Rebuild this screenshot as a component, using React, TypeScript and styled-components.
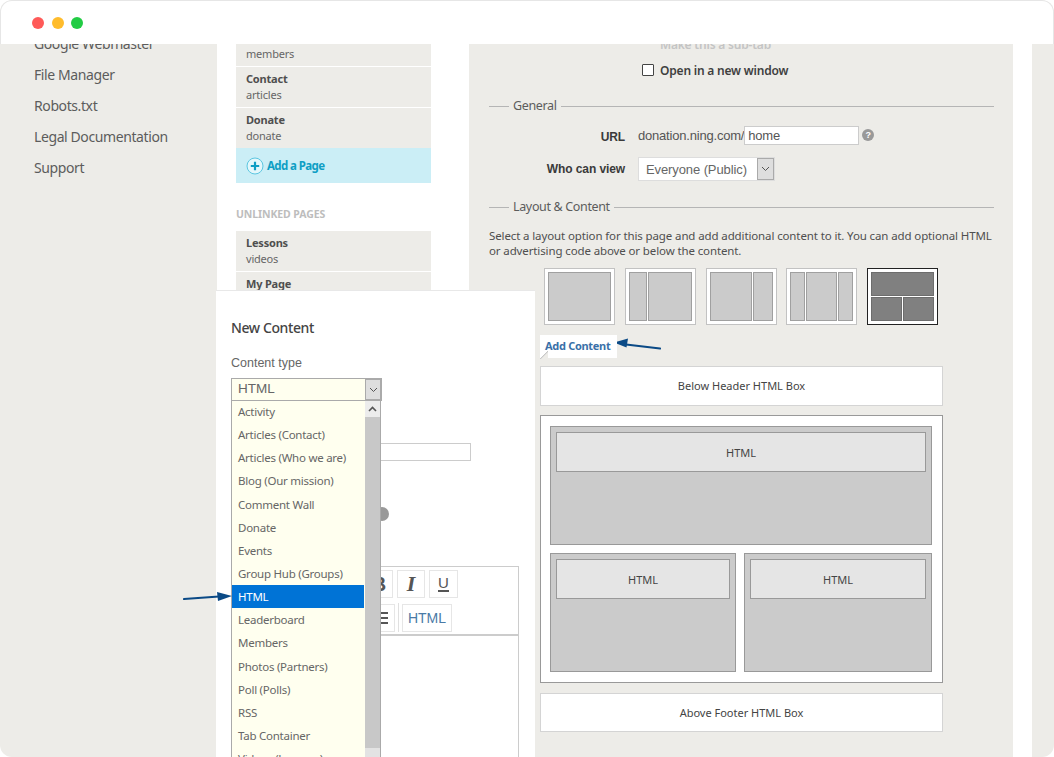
import React from 'react';
import styled, { createGlobalStyle } from 'styled-components';

const UI_FONT = '"Noto Sans", "Open Sans", sans-serif';
const FORM_FONT = '"Liberation Sans", Arial, sans-serif';

const GlobalStyle = createGlobalStyle`
  html, body {
    margin: 0;
    padding: 0;
    background: #fff;
    overflow: hidden;
  }

  * {
    box-sizing: border-box;
  }
`;

const Frame = styled.div`
  position: relative;
  width: 1054px;
  height: 757px;
  display: flex;
  flex-direction: column;
  overflow: hidden;
  background: #edece8;
  border-radius: 12px;
  font-family: ${UI_FONT};
  color: #555;
`;

const TitleBar = styled.header`
  flex: 0 0 44px;
  display: flex;
  align-items: center;
  gap: 7.5px;
  padding: 1px 0 0 31px;
  background: #fff;
  border: 1px solid #e6e6e6;
  border-bottom: 0;
  border-radius: 12px 12px 0 0;
`;

const Dot = styled.span<{ $color: string }>`
  width: 12px;
  height: 12px;
  border-radius: 50%;
  background: ${(p) => p.$color};
`;

const Body = styled.div`
  flex: 1;
  display: flex;
  min-height: 0;
  overflow: hidden;
`;

const Sidebar = styled.nav`
  flex: 0 0 217px;
  display: flex;
  flex-direction: column;
  margin-top: -16px;
  padding-left: 34px;
`;

const SideLink = styled.div`
  height: 31px;
  line-height: 31px;
  font-size: 14px;
  color: #5c5c5c;
  letter-spacing: -0.4px;
`;

const PagesColumn = styled.section`
  flex: 0 0 252px;
  display: flex;
  flex-direction: column;
  margin-top: -18px;
  padding-left: 19px;
  padding-right: 38px;
  background: #fff;
`;

const PageRow = styled.div`
  height: 40px;
  margin-bottom: 1px;
  padding: 4px 10px 0;
  background: #edece8;
  font-size: 11px;
  line-height: 15.5px;
  letter-spacing: -0.2px;
  color: #666;
`;

const PageName = styled.div`
  font-weight: 700;
  color: #4f4f4f;
`;

const AddPage = styled.div`
  height: 35px;
  margin-top: -1px;
  display: flex;
  align-items: center;
  gap: 3px;
  padding-left: 10px;
  background: #cbeef6;
  color: #0f9ec4;
  font-size: 11.5px;
  font-weight: 700;
  letter-spacing: -0.6px;
`;

const SectionHead = styled.div`
  margin: 23px 0 9px;
  height: 16px;
  line-height: 16px;
  font-size: 10.5px;
  font-weight: 700;
  letter-spacing: -0.1px;
  color: #bdbdbd;
`;

const FormPanel = styled.section`
  flex: 0 0 544px;
  display: flex;
  flex-direction: column;
  margin-top: -8px;
  padding: 0 19px 0 20px;
`;

const CheckRow = styled.label<{ $muted?: boolean }>`
  height: 16px;
  margin-bottom: 10px;
  display: flex;
  align-items: center;
  gap: 6px;
  padding-left: 153px;
  font-size: 12px;
  font-weight: 600;
  letter-spacing: -0.2px;
  color: ${(p) => (p.$muted ? '#c4c4c4' : '#3f3f3f')};
`;

const CheckBox = styled.span<{ $muted?: boolean }>`
  width: 12px;
  height: 12px;
  background: #fff;
  border: 1px solid ${(p) => (p.$muted ? 'transparent' : '#444')};
  border-radius: 1px;
  opacity: ${(p) => (p.$muted ? 0 : 1)};
`;

const Legend = styled.div<{ $mt: number }>`
  margin-top: ${(p) => p.$mt}px;
  display: flex;
  align-items: center;
  gap: 4px;
  font-size: 12.5px;
  line-height: 18px;
  letter-spacing: -0.35px;
  color: #5c5c5c;

  &::before {
    content: '';
    flex: 0 0 20px;
    height: 1px;
    background: #b5b5b5;
  }

  &::after {
    content: '';
    flex: 1;
    height: 1px;
    background: #b5b5b5;
  }
`;

const FieldRow = styled.div<{ $h: number; $mt: number }>`
  height: ${(p) => p.$h}px;
  margin-top: ${(p) => p.$mt}px;
  display: flex;
  align-items: center;
  gap: 13px;
  font-family: ${FORM_FONT};
`;

const FieldLabel = styled.div<{ $shift?: number }>`
  flex: 0 0 136px;
  padding-top: ${(p) => p.$shift || 0}px;
  text-align: right;
  font-size: 12px;
  font-weight: 700;
  letter-spacing: -0.1px;
  color: #3a3a3a;
`;

const UrlValue = styled.div`
  display: flex;
  align-items: center;
  font-size: 13px;
  letter-spacing: -0.2px;
  color: #555;
`;

const TextBox = styled.div`
  width: 115px;
  height: 19px;
  margin-right: 3px;
  padding-left: 3px;
  line-height: 17px;
  background: #fff;
  border: 1px solid #ccc;
`;

const HelpDot = styled.span`
  width: 12px;
  height: 12px;
  border-radius: 50%;
  background: #999;
  color: #fff;
  font: 700 9px/12px ${FORM_FONT};
  text-align: center;
`;

const SelectBox = styled.div`
  width: 137px;
  height: 24px;
  display: flex;
  align-items: center;
  justify-content: space-between;
  padding-left: 7px;
  background: #fff;
  border: 1px solid #ddd;
  font-size: 13px;
  letter-spacing: -0.1px;
  color: #666;
`;

const SelectArrow = styled.span<{ $w: number }>`
  align-self: stretch;
  flex: 0 0 ${(p) => p.$w}px;
  display: flex;
  align-items: center;
  justify-content: center;
  background: #dedede;
  border: 1px solid #aaa;
`;

const Intro = styled.p`
  margin: 12px 0 10px;
  font-size: 11.5px;
  line-height: 15px;
  letter-spacing: -0.12px;
  color: #4f4f4f;
`;

const ThumbRow = styled.div`
  display: flex;
  gap: 9.75px;
  padding-left: 55px;
`;

const Thumb = styled.div<{ $cols: string; $active?: boolean }>`
  width: 71px;
  height: 57px;
  display: grid;
  grid-template-columns: ${(p) => p.$cols};
  grid-auto-rows: 1fr;
  gap: 1px;
  padding: 3px;
  background: #fff;
  border: 1px solid ${(p) => (p.$active ? '#222' : '#c2c2c2')};
`;

const ThumbCell = styled.span<{ $wide?: boolean; $active?: boolean }>`
  grid-column: ${(p) => (p.$wide ? '1 / -1' : 'auto')};
  background: ${(p) => (p.$active ? '#808080' : '#cbcbcb')};
  border: 1px solid ${(p) => (p.$active ? '#6d6d6d' : '#a0a0a0')};
`;

const AddRow = styled.div`
  display: flex;
  align-items: flex-start;
  height: 31px;
  margin-top: 10px;
  padding-left: 51px;
`;

const AddTab = styled.div`
  position: relative;
  width: 77px;
  height: 23px;
  padding-left: 5px;
  line-height: 22px;
  background: #fff;
  font-size: 11px;
  font-weight: 700;
  letter-spacing: -0.3px;
  color: #3a70a8;

  &::after {
    content: '';
    position: absolute;
    left: 0;
    bottom: -1px;
    width: 8px;
    height: 8px;
    background: linear-gradient(135deg, #fff 50%, #c8c8c8 50%, #edece8 60%);
  }
`;

const Canvas = styled.div`
  width: 403px;
  margin-left: 51px;
  display: flex;
  flex-direction: column;
  gap: 9.5px;
`;

const HtmlBand = styled.div`
  height: 39.5px;
  display: flex;
  align-items: center;
  justify-content: center;
  background: #fff;
  border: 1px solid #d4d4d4;
  font-size: 11px;
  color: #444;
`;

const LayoutBox = styled.div`
  height: 268px;
  display: grid;
  grid-template-columns: 186px 188px;
  grid-template-rows: 119px 119px;
  gap: 8px;
  padding: 10px 10px 10px 9px;
  background: #fff;
  border: 1px solid #999;
`;

const Zone = styled.div<{ $wide?: boolean }>`
  grid-column: ${(p) => (p.$wide ? '1 / -1' : 'auto')};
  padding: 5px;
  background: #cbcbcb;
  border: 1px solid #999;
`;

const ZoneItem = styled.div`
  height: 40px;
  display: flex;
  align-items: center;
  justify-content: center;
  background: #e5e5e5;
  border: 1px solid #999;
  font-size: 11px;
  color: #444;
`;

const Gutter = styled.div`
  flex: 0 0 19px;
  background: #fff;
`;

const Modal = styled.div`
  position: absolute;
  left: 216px;
  top: 290px;
  width: 319px;
  height: 467px;
  padding: 27px 17px 0 15px;
  overflow: hidden;
  background: #fff;
  border-top: 1px solid #e8e8e8;
`;

const ModalTitle = styled.div`
  height: 20px;
  line-height: 20px;
  font-size: 14px;
  font-weight: 500;
  letter-spacing: -0.4px;
  color: #444;
`;

const ModalLabel = styled.div`
  margin-top: 16px;
  height: 18px;
  line-height: 18px;
  font-family: ${FORM_FONT};
  font-size: 12.5px;
  color: #666;
`;

const ModalSelect = styled.div`
  position: relative;
  z-index: 2;
  width: 151px;
  height: 23px;
  margin-top: 6px;
  display: flex;
  align-items: center;
  justify-content: space-between;
  padding: 0 0 0 6px;
  background: #ffffef;
  border: 1px solid #aaa;
  font-family: ${FORM_FONT};
  font-size: 13.5px;
  color: #666;
`;

const SelectText = styled.span`
  padding-bottom: 2px;
`;

const BehindInput = styled.div`
  width: 240px;
  height: 18px;
  margin-top: 42px;
  background: #fff;
  border: 1px solid #ccc;
`;

const BehindHelp = styled.div`
  width: 14px;
  height: 14px;
  margin: 46px 0 0 144px;
  border-radius: 50%;
  background: #999;
`;

const Editor = styled.div`
  width: 288px;
  height: 210px;
  margin-top: 45px;
  border: 1px solid #ccc;
`;

const Toolbar = styled.div`
  height: 69px;
  display: flex;
  flex-direction: column;
  gap: 6px;
  padding-top: 3px;
  border-bottom: 2px solid #ccc;
`;

const ToolRow = styled.div<{ $inset: number }>`
  height: 28px;
  display: flex;
  gap: 4px;
  padding-left: ${(p) => p.$inset}px;
`;

const ToolButton = styled.div<{ $w: number }>`
  width: ${(p) => p.$w}px;
  display: flex;
  align-items: center;
  justify-content: center;
  background: #fff;
  border: 1px solid #e6e6e6;
  color: #555;
`;

const ItalicGlyph = styled.span`
  font: italic 700 22px/1 "Liberation Serif", serif;
`;

const BoldGlyph = styled.span`
  font: 700 20px/1 "Liberation Sans", sans-serif;
`;

const UnderGlyph = styled.span`
  padding-bottom: 1px;
  border-bottom: 2px solid #555;
  font: 400 15px/13px "Liberation Sans", sans-serif;
`;

const HtmlGlyph = styled.span`
  font: 400 14px/1 "Liberation Sans", sans-serif;
  color: #4a7aa6;
`;

const ToolDivider = styled.span`
  width: 1px;
  margin: -1px -1px 0 -1px;
  align-self: stretch;
  background: #e0e0e0;
`;

const Dropdown = styled.div`
  position: absolute;
  z-index: 1;
  left: 15px;
  top: 109px;
  width: 150px;
  height: 400px;
  display: flex;
  background: #ffffef;
  border-left: 1px solid #aaa;
  border-right: 1px solid #aaa;
  font-family: ${UI_FONT};
`;

const OptionList = styled.div`
  flex: 0 0 132px;
  display: flex;
  flex-direction: column;
`;

const Option = styled.div<{ $active?: boolean }>`
  flex: 0 0 23.15px;
  padding-left: 6px;
  line-height: 23px;
  font-size: 11.5px;
  letter-spacing: -0.25px;
  white-space: nowrap;
  color: ${(p) => (p.$active ? '#fff' : '#666')};
  background: ${(p) => (p.$active ? '#0073d6' : 'transparent')};
`;

const ScrollTrack = styled.div`
  flex: 1;
  display: flex;
  flex-direction: column;
  margin-left: 1px;
  background: #e3e3e3;
`;

const ScrollUp = styled.div`
  flex: 0 0 17px;
  display: flex;
  align-items: center;
  justify-content: center;
  background: #ececec;
`;

const ScrollThumb = styled.div`
  flex: 0 0 331px;
  background: #c8c8c8;
`;

const Pointer = styled.svg`
  position: absolute;
  z-index: 3;
  left: 183px;
  top: 590px;
`;

const Chevron = ({ up = false }: { up?: boolean }) => (
  <svg width='9' height='6' viewBox='0 0 9 6' fill='none' stroke='#555' strokeWidth={up ? 1.6 : 1}>
    <path d={up ? 'M1 5l3.5-3.5L8 5' : 'M1 1l3.5 3.5L8 1'} />
  </svg>
);

const PlusCircle = () => (
  <svg width='18' height='18' viewBox='0 0 18 18' fill='none'>
    <circle cx='9' cy='9' r='8' stroke='#5cc6e0' strokeWidth='1' fill='#e4f7fb' />
    <path d='M9 4.8v8.4M4.8 9h8.4' stroke='#0f9ec4' strokeWidth='2.2' />
  </svg>
);

const ListLines = () => (
  <svg width='14' height='14' viewBox='0 0 14 14' stroke='#555' strokeWidth='2'>
    <path d='M0 2h14M0 7h14M0 12h14' />
  </svg>
);

const sideLinks = ['Google Webmaster', 'File Manager', 'Robots.txt', 'Legal Documentation', 'Support'];

const linkedPages = [
  { name: 'Members', path: 'members' },
  { name: 'Contact', path: 'articles' },
  { name: 'Donate', path: 'donate' }
];

const unlinkedPages = [
  { name: 'Lessons', path: 'videos' },
  { name: 'My Page', path: 'page' }
];

const thumbs = [
  { cols: '1fr', cells: 1 },
  { cols: '18fr 44fr', cells: 2 },
  { cols: '44fr 20fr', cells: 2 },
  { cols: '15fr 32fr 15fr', cells: 3 }
];

const contentTypes = [
  'Activity',
  'Articles (Contact)',
  'Articles (Who we are)',
  'Blog (Our mission)',
  'Comment Wall',
  'Donate',
  'Events',
  'Group Hub (Groups)',
  'HTML',
  'Leaderboard',
  'Members',
  'Photos (Partners)',
  'Poll (Polls)',
  'RSS',
  'Tab Container',
  'Videos (Lessons)'
];

const App: React.FC = () => (
  <>
    <GlobalStyle />
    <Frame>
      <TitleBar>
        <Dot $color='#ff5a58' />
        <Dot $color='#ffbc2c' />
        <Dot $color='#22cc44' />
      </TitleBar>
      <Body>
        <Sidebar>
          {sideLinks.map((link) => (
            <SideLink key={link}>{link}</SideLink>
          ))}
        </Sidebar>

        <PagesColumn>
          {linkedPages.map((page) => (
            <PageRow key={page.name}>
              <PageName>{page.name}</PageName>
              {page.path}
            </PageRow>
          ))}
          <AddPage>
            <PlusCircle />
            Add a Page
          </AddPage>
          <SectionHead>UNLINKED PAGES</SectionHead>
          {unlinkedPages.map((page) => (
            <PageRow key={page.name}>
              <PageName>{page.name}</PageName>
              {page.path}
            </PageRow>
          ))}
        </PagesColumn>

        <FormPanel>
          <CheckRow $muted>
            <CheckBox $muted />
            Make this a sub-tab
          </CheckRow>
          <CheckRow>
            <CheckBox />
            Open in a new window
          </CheckRow>
          <Legend $mt={9}>General</Legend>
          <FieldRow $h={20} $mt={10}>
            <FieldLabel $shift={4}>URL</FieldLabel>
            <UrlValue>
              donation.ning.com/
              <TextBox>home</TextBox>
              <HelpDot>?</HelpDot>
            </UrlValue>
          </FieldRow>
          <FieldRow $h={24} $mt={12}>
            <FieldLabel>Who can view</FieldLabel>
            <SelectBox>
              Everyone (Public)
              <SelectArrow $w={17}>
                <Chevron />
              </SelectArrow>
            </SelectBox>
          </FieldRow>
          <Legend $mt={17}>Layout &amp; Content</Legend>
          <Intro>
            Select a layout option for this page and add additional content to it. You can add optional HTML
            or advertising code above or below the content.
          </Intro>
          <ThumbRow>
            {thumbs.map((thumb) => (
              <Thumb key={thumb.cols} $cols={thumb.cols}>
                {Array.from({ length: thumb.cells }, (_, i) => (
                  <ThumbCell key={i} />
                ))}
              </Thumb>
            ))}
            <Thumb $cols='1fr 1fr' $active>
              <ThumbCell $wide $active />
              <ThumbCell $active />
              <ThumbCell $active />
            </Thumb>
          </ThumbRow>
          <AddRow>
            <AddTab>Add Content</AddTab>
            <svg width='48' height='14' viewBox='0 0 48 14' style={{ margin: '2px 0 0 -3px' }}>
              <path d='M46 11.5L12 7.5' stroke='#0b4a86' strokeWidth='2.2' strokeLinecap='round' />
              <path d='M0 5.5L14 1.5L12.5 10.5Z' fill='#0b4a86' />
            </svg>
          </AddRow>
          <Canvas>
            <HtmlBand>Below Header HTML Box</HtmlBand>
            <LayoutBox>
              <Zone $wide>
                <ZoneItem>HTML</ZoneItem>
              </Zone>
              <Zone>
                <ZoneItem>HTML</ZoneItem>
              </Zone>
              <Zone>
                <ZoneItem>HTML</ZoneItem>
              </Zone>
            </LayoutBox>
            <HtmlBand>Above Footer HTML Box</HtmlBand>
          </Canvas>
        </FormPanel>

        <Gutter />
      </Body>

      <Modal>
        <ModalTitle>New Content</ModalTitle>
        <ModalLabel>Content type</ModalLabel>
        <ModalSelect>
          <SelectText>HTML</SelectText>
          <SelectArrow $w={16}>
            <Chevron />
          </SelectArrow>
        </ModalSelect>
        <BehindInput />
        <BehindHelp />
        <Editor>
          <Toolbar>
            <ToolRow $inset={133}>
              <ToolButton $w={28}>
                <BoldGlyph>B</BoldGlyph>
              </ToolButton>
              <ToolButton $w={28}>
                <ItalicGlyph>I</ItalicGlyph>
              </ToolButton>
              <ToolButton $w={29}>
                <UnderGlyph>U</UnderGlyph>
              </ToolButton>
            </ToolRow>
            <ToolRow $inset={135}>
              <ToolButton $w={28}>
                <ListLines />
              </ToolButton>
              <ToolDivider />
              <ToolButton $w={50}>
                <HtmlGlyph>HTML</HtmlGlyph>
              </ToolButton>
            </ToolRow>
          </Toolbar>
        </Editor>
        <Dropdown>
          <OptionList>
            {contentTypes.map((type) => (
              <Option key={type} $active={type === 'HTML'}>{type}</Option>
            ))}
          </OptionList>
          <ScrollTrack>
            <ScrollUp>
              <Chevron up />
            </ScrollUp>
            <ScrollThumb />
          </ScrollTrack>
        </Dropdown>
      </Modal>

      <Pointer width='50' height='14' viewBox='0 0 50 14'>
        <path d='M1 9L36 6.5' stroke='#0b4a86' strokeWidth='2.2' strokeLinecap='round' />
        <path d='M49 6L34 2L35 11Z' fill='#0b4a86' />
      </Pointer>
    </Frame>
  </>
);

export default App;
